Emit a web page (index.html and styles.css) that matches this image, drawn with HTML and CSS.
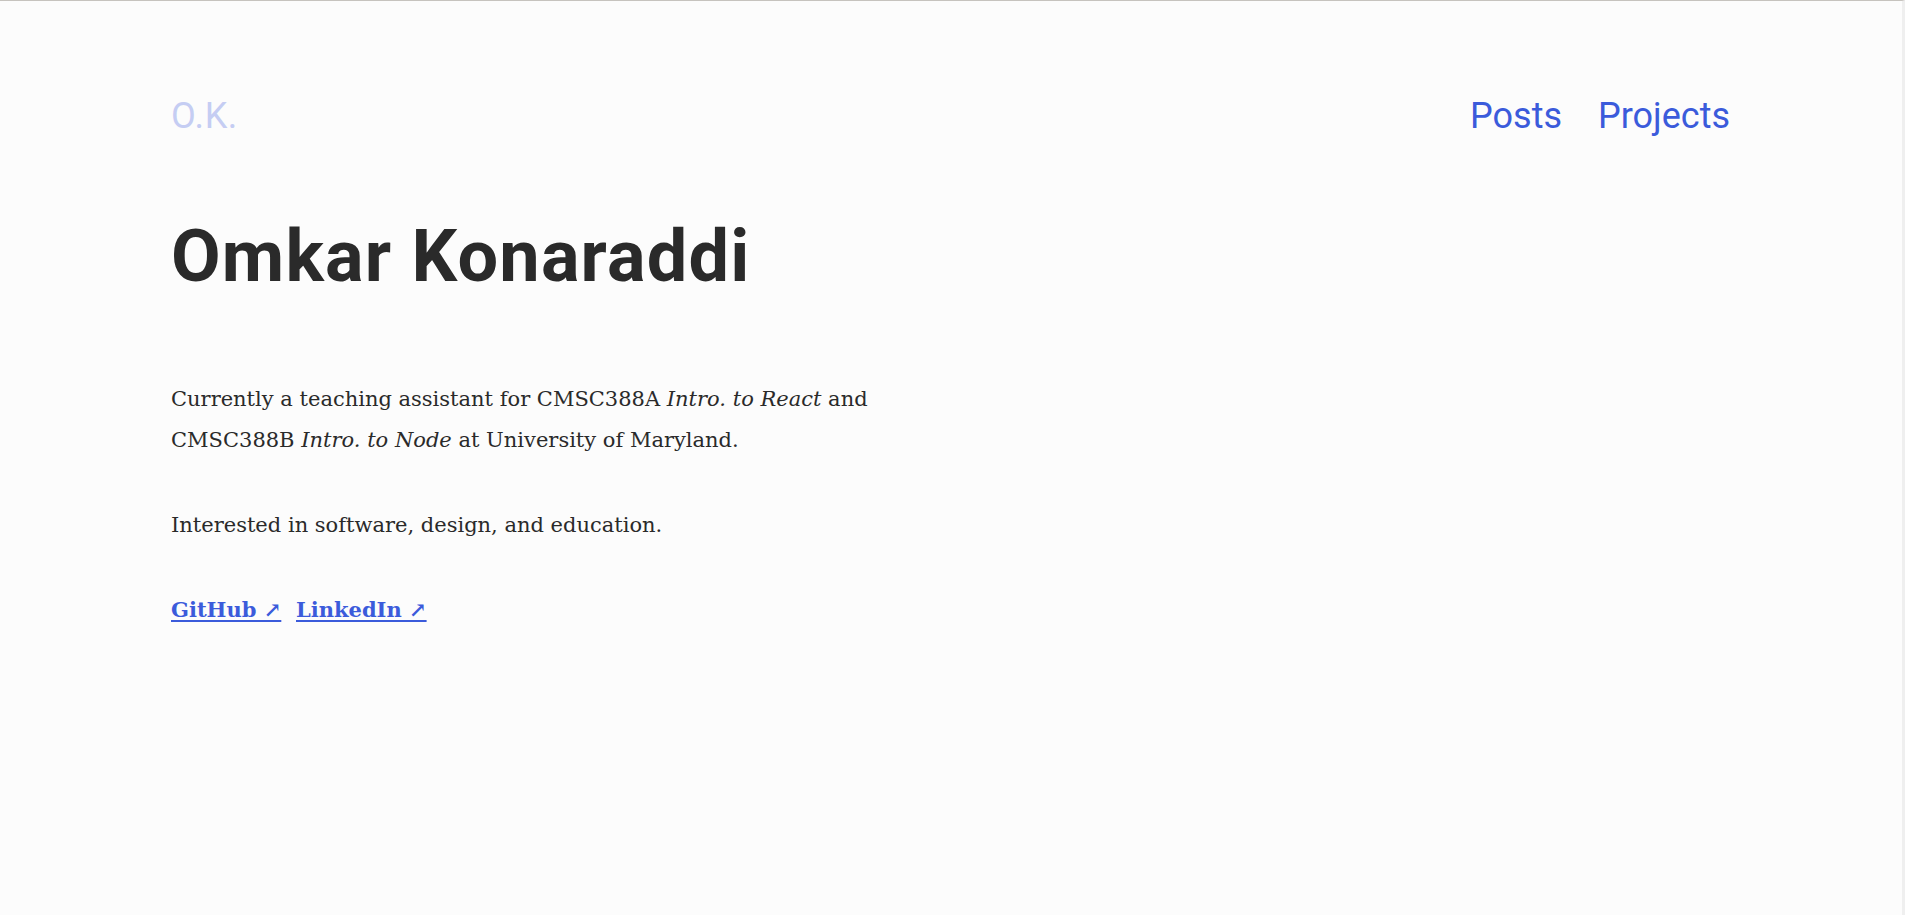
FILE: index.html
```html
<!DOCTYPE html>
<html lang="en">
<head>
<meta charset="utf-8">
<title>Omkar Konaraddi</title>
<link rel="stylesheet" href="styles.css">
</head>
<body>
<div class="page">
  <div class="container">
    <header class="site-header">
      <a class="logo" href="#">O.K.</a>
      <nav class="nav">
        <a href="#">Posts</a>
        <a href="#">Projects</a>
      </nav>
    </header>
    <main class="content">
      <h1 class="title">Omkar Konaraddi</h1>
      <p class="text">Currently a teaching assistant for CMSC388A <em>Intro. to React</em> and CMSC388B <em>Intro. to Node</em> at University of Maryland.</p>
      <p class="text">Interested in software, design, and education.</p>
      <p class="text links"><a href="#">GitHub ↗</a> <a href="#">LinkedIn ↗</a></p>
    </main>
  </div>
</div>
</body>
</html>
```

FILE: styles.css
```css
html, body {
  margin: 0;
  padding: 0;
  background: #fcfcfc;
}

.page {
  min-height: 100vh;
  box-sizing: border-box;
  border-top: 1px solid #c6c3be;
  border-right: 3px solid #efefef;
}

.container {
  padding: 0 172px 0 171px;
}

.site-header {
  display: flex;
  justify-content: space-between;
  align-items: baseline;
  padding-top: 93px;
  font-family: Roboto, "Liberation Sans", sans-serif;
  font-size: 36px;
  line-height: 44px;
}

.site-header a {
  text-decoration: none;
}

.logo {
  color: #c5cdf3;
  letter-spacing: 0.6px;
}

.nav {
  display: flex;
  gap: 36px;
}

.nav a {
  color: #3b5bdb;
}

.title {
  margin: 83px 0 0;
  font-family: Roboto, "Liberation Sans", sans-serif;
  font-weight: 700;
  font-size: 72px;
  line-height: 72px;
  letter-spacing: 1.2px;
  color: #2a2a2a;
}

.content {
  padding-bottom: 40px;
}

.text {
  max-width: 725px;
  margin: 44px 0 0;
  font-family: "DejaVu Serif", "Liberation Serif", serif;
  font-size: 21px;
  line-height: 41px;
  color: #2a2a2a;
}

.title + .text {
  margin-top: 86px;
}

.text.links {
  margin-top: 43px;
}

.links a {
  color: #3b5bdb;
  font-weight: 700;
  text-decoration: underline;
  text-underline-offset: 3px;
  margin-right: 8px;
}
```
